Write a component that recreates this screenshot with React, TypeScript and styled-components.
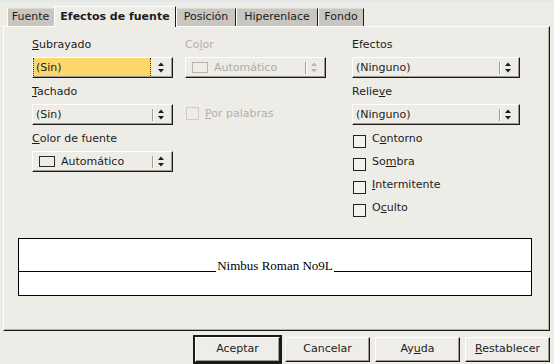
import styled, { createGlobalStyle } from 'styled-components';

const GlobalStyle = createGlobalStyle`
  html, body {
    margin: 0;
    padding: 0;
    background: #edece7;
  }
  body {
    font-family: "DejaVu Sans", "Liberation Sans", sans-serif;
    font-size: 11px;
    color: #1c1c1c;
  }
`;

const Window = styled.div`
  width: 554px;
  height: 364px;
  box-sizing: border-box;
  border-top: 2px solid #e2e8ea;
  background: #edece7;
  display: flex;
  flex-direction: column;
  overflow: hidden;
`;

const TabRow = styled.div`
  display: flex;
  align-items: flex-end;
  height: 24px;
  padding-left: 7px;
`;

const Tab = styled.div<{ $active?: boolean; $width: number; $hideRight?: boolean }>`
  box-sizing: border-box;
  width: ${p => p.$width}px;
  height: ${p => (p.$active ? 21 : 18)}px;
  margin-bottom: ${p => (p.$active ? -1 : 0)}px;
  padding-top: ${p => (p.$active ? 3 : 1)}px;
  line-height: 13px;
  text-align: center;
  white-space: nowrap;
  background: ${p => (p.$active ? '#edece7' : '#c8c6bf')};
  border-top: 1px solid ${p => (p.$active ? '#ffffff' : '#dcdad4')};
  border-left: 1px solid #ffffff;
  border-right: 1px solid ${p => (p.$hideRight ? '#c8c6bf' : '#1a1a1a')};
  font-weight: ${p => (p.$active ? 'bold' : 'normal')};
  position: relative;
  z-index: ${p => (p.$active ? 1 : 0)};
`;

const Panel = styled.div`
  box-sizing: border-box;
  height: 305px;
  margin: 0 4px 0 3px;
  border: 1px solid;
  border-color: #ffffff #1a1a1a #1a1a1a #ffffff;
  box-shadow: inset -1px -1px 0 #b3b1aa;
  display: flex;
  flex-direction: column;
`;

const FormRow = styled.div`
  display: flex;
  padding: 11px 0 0 28px;
`;

const Column = styled.div<{ $width: number; $ml?: number }>`
  display: flex;
  flex-direction: column;
  width: ${p => p.$width}px;
  margin-left: ${p => p.$ml ?? 0}px;
`;

const Label = styled.div<{ $disabled?: boolean }>`
  height: 13px;
  line-height: 13px;
  margin-bottom: 6px;
  white-space: nowrap;
  color: ${p => (p.$disabled ? '#b3b1aa' : '#1c1c1c')};
`;

const Mn = styled.span`
  text-decoration: underline;
`;

const SelectBox = styled.div<{ $disabled?: boolean }>`
  box-sizing: border-box;
  height: 21px;
  margin-bottom: 7px;
  display: flex;
  align-items: center;
  border: 1px solid;
  border-color: #ffffff #1a1a1a #1a1a1a #ffffff;
  box-shadow: inset -1px -1px 0 #9d9b94;
  color: ${p => (p.$disabled ? '#aeaca5' : '#1c1c1c')};
`;

const Field = styled.div<{ $focused?: boolean }>`
  flex: 1;
  align-self: stretch;
  display: flex;
  align-items: center;
  box-sizing: border-box;
  padding-left: 2px;
  margin-bottom: 1px;
  line-height: 13px;
  white-space: nowrap;
  background: ${p => (p.$focused ? '#fcd86c' : 'transparent')};
  border-left: 1px dotted ${p => (p.$focused ? '#333' : 'transparent')};
  border-right: 1px dotted ${p => (p.$focused ? '#333' : 'transparent')};
`;

const Sep = styled.div<{ $hidden?: boolean }>`
  width: 0;
  height: 12px;
  border-left: 1px solid ${p => (p.$hidden ? 'transparent' : '#9d9b94')};
  border-right: 1px solid ${p => (p.$hidden ? 'transparent' : '#ffffff')};
  margin-left: 1px;
`;

const Swatch = styled.span<{ $disabled?: boolean }>`
  display: inline-block;
  box-sizing: border-box;
  width: 16px;
  height: 11px;
  margin: 0 6px 0 3px;
  border: 1px solid ${p => (p.$disabled ? '#b8b6af' : '#2a2a2a')};
`;

const Arrows = styled.svg`
  display: block;
  margin: 0 8px 0 4px;
  flex: none;
`;

const CheckList = styled.div<{ $mt: number; $gap: number }>`
  display: flex;
  flex-direction: column;
  gap: ${p => p.$gap}px;
  margin-top: ${p => p.$mt}px;
`;

const CheckRow = styled.div<{ $disabled?: boolean }>`
  display: flex;
  align-items: flex-start;
  height: 13px;
  line-height: 13px;
  white-space: nowrap;
  color: ${p => (p.$disabled ? '#b3b1aa' : '#1c1c1c')};
`;

const Box = styled.span<{ $disabled?: boolean; $top: number }>`
  box-sizing: border-box;
  width: 13px;
  height: 13px;
  margin: ${p => p.$top}px 6px 0 1px;
  flex: none;
  background: ${p => (p.$disabled ? 'transparent' : '#f3f2ee')};
  border: 1px solid ${p => (p.$disabled ? '#cfcdc6' : '#222')};
`;

const Preview = styled.div`
  box-sizing: border-box;
  width: 514px;
  height: 58px;
  margin: 24px 0 0 14px;
  padding-top: 21px;
  border: 1px solid #000;
  background: #ffffff;
`;

const SampleRow = styled.div`
  display: flex;
  align-items: flex-end;
  height: 12px;
`;

const Rule = styled.div`
  flex: 1;
  height: 1px;
  background: #000;
`;

const SampleText = styled.span`
  font-family: "Liberation Serif", "DejaVu Serif", serif;
  font-size: 13px;
  line-height: 12px;
  color: #000;
  white-space: nowrap;
  padding: 0 1px;
`;

const ButtonRow = styled.div`
  display: flex;
  justify-content: flex-end;
  gap: 5px;
  padding-right: 4px;
  margin-top: 6px;
`;

const Button = styled.button<{ $default?: boolean }>`
  box-sizing: border-box;
  width: 85px;
  height: 25px;
  padding: 0 0 3px;
  font: inherit;
  color: #1c1c1c;
  background: #eeede9;
  border: 1px solid;
  border-color: #ffffff #1a1a1a #1a1a1a #ffffff;
  box-shadow: inset -1px -1px 0 #9d9b94 ${p => (p.$default ? ', 0 0 0 2px #1a1a1a' : '')};
`;

const SpinArrows = ({ disabled }: { disabled?: boolean }) => (
  <Arrows width="6" height="11" viewBox="0 0 6 11">
    <polygon points="0,4 3,0.5 6,4" fill={disabled ? '#b8b6af' : '#1c1c1c'} />
    <polygon points="0,7 3,10.5 6,7" fill={disabled ? '#b8b6af' : '#1c1c1c'} />
  </Arrows>
);

const Select = ({
  children,
  focused,
  disabled,
}: {
  children: React.ReactNode;
  focused?: boolean;
  disabled?: boolean;
}) => (
  <SelectBox $disabled={disabled}>
    <Field $focused={focused}>{children}</Field>
    <Sep $hidden={focused} />
    <SpinArrows disabled={disabled} />
  </SelectBox>
);

const tabs = [
  { name: 'Fuente', width: 47 },
  { name: 'Efectos de fuente', width: 122, active: true },
  { name: 'Posición', width: 60 },
  { name: 'Hiperenlace', width: 82 },
  { name: 'Fondo', width: 46 },
];

const App = () => {
  return (
    <Window>
      <GlobalStyle />
      <TabRow>
        {tabs.map((t, i) => (
          <Tab
            key={t.name}
            $width={t.width}
            $active={t.active}
            $hideRight={tabs[i + 1]?.active}
          >
            {t.name}
          </Tab>
        ))}
      </TabRow>

      <Panel>
        <FormRow>
          <Column $width={141}>
            <Label><Mn>S</Mn>ubrayado</Label>
            <Select focused>(Sin)</Select>
            <Label><Mn>T</Mn>achado</Label>
            <Select>(Sin)</Select>
            <Label><Mn>C</Mn>olor de fuente</Label>
            <Select>
              <Swatch />
              Automático
            </Select>
          </Column>

          <Column $width={141} $ml={12}>
            <Label $disabled>Co<Mn>l</Mn>or</Label>
            <Select disabled>
              <Swatch $disabled />
              Automático
            </Select>
            <CheckList $mt={22} $gap={0}>
              <CheckRow $disabled>
                <Box $disabled $top={0} />
                <span><Mn>P</Mn>or palabras</span>
              </CheckRow>
            </CheckList>
          </Column>

          <Column $width={168} $ml={26}>
            <Label>Efectos</Label>
            <Select>(Ninguno)</Select>
            <Label>Relie<Mn>v</Mn>e</Label>
            <Select>(Ninguno)</Select>
            <CheckList $mt={0} $gap={10}>
              <CheckRow>
                <Box $top={3} />
                <span>C<Mn>o</Mn>ntorno</span>
              </CheckRow>
              <CheckRow>
                <Box $top={3} />
                <span>So<Mn>m</Mn>bra</span>
              </CheckRow>
              <CheckRow>
                <Box $top={3} />
                <span><Mn>I</Mn>ntermitente</span>
              </CheckRow>
              <CheckRow>
                <Box $top={3} />
                <span>O<Mn>c</Mn>ulto</span>
              </CheckRow>
            </CheckList>
          </Column>
        </FormRow>

        <Preview>
          <SampleRow>
            <Rule />
            <SampleText>Nimbus Roman No9L</SampleText>
            <Rule />
          </SampleRow>
        </Preview>
      </Panel>

      <ButtonRow>
        <Button $default>Aceptar</Button>
        <Button>Cancelar</Button>
        <Button>Ay<Mn>u</Mn>da</Button>
        <Button><Mn>R</Mn>establecer</Button>
      </ButtonRow>
    </Window>
  );
};

export default App;
